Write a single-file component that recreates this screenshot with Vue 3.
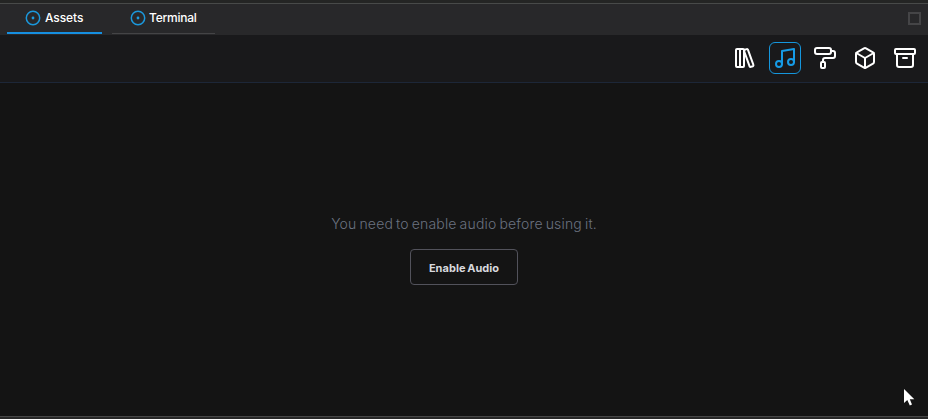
<script setup>
const tabs = [
  { name: 'Assets', active: true },
  { name: 'Terminal', active: false },
]
const tools = [
  {
    name: 'library',
    paths: [
      'M4 3h6a1 1 0 0 1 1 1v16a1 1 0 0 1-1 1H4a1 1 0 0 1-1-1V4a1 1 0 0 1 1-1z',
      'M7 3v18',
      'M20.4 18.9c.2.5-.1 1.1-.6 1.3l-1.9.7c-.5.2-1.1-.1-1.3-.6L11.1 5.1c-.2-.5.1-1.1.6-1.3l1.9-.7c.5-.2 1.1.1 1.3.6Z',
    ],
  },
  {
    name: 'music',
    active: true,
    paths: ['M9 18V5l12-2v13', 'M9 18a3 3 0 1 1-6 0a3 3 0 0 1 6 0', 'M21 16a3 3 0 1 1-6 0a3 3 0 0 1 6 0'],
  },
  {
    name: 'paint',
    paths: [
      'M4 2h12a2 2 0 0 1 2 2v2a2 2 0 0 1-2 2H4a2 2 0 0 1-2-2V4a2 2 0 0 1 2-2z',
      'M10 16v-2a2 2 0 0 1 2-2h8a2 2 0 0 0 2-2V7a2 2 0 0 0-2-2h-2',
      'M9 16h2a1 1 0 0 1 1 1v4a1 1 0 0 1-1 1H9a1 1 0 0 1-1-1v-4a1 1 0 0 1 1-1z',
    ],
  },
  {
    name: 'box',
    paths: [
      'M21 8a2 2 0 0 0-1-1.73l-7-4a2 2 0 0 0-2 0l-7 4A2 2 0 0 0 3 8v8a2 2 0 0 0 1 1.73l7 4a2 2 0 0 0 2 0l7-4A2 2 0 0 0 21 16Z',
      'm3.3 7 8.7 5 8.7-5',
      'M12 22V12',
    ],
  },
  {
    name: 'archive',
    paths: [
      'M3 3h18a1 1 0 0 1 1 1v3a1 1 0 0 1-1 1H3a1 1 0 0 1-1-1V4a1 1 0 0 1 1-1z',
      'M4 8v11a2 2 0 0 0 2 2h12a2 2 0 0 0 2-2V8',
      'M10 12h4',
    ],
  },
]
</script>

<template>
  <div class="panel">
    <header class="tabbar">
      <nav class="tabs">
        <div v-for="t in tabs" :key="t.name" class="tab" :class="[t.name.toLowerCase(), { active: t.active }]">
          <svg class="dot" width="16" height="16" viewBox="0 0 16 16">
            <circle cx="8" cy="8" r="6.7" fill="none" stroke="#1b98dc" stroke-width="1.5" />
            <circle cx="8" cy="8" r="1.4" fill="#1b9be0" />
          </svg>
          <span class="label">{{ t.name }}</span>
        </div>
      </nav>
      <div class="maximize"></div>
    </header>
    <div class="toolbar">
      <button v-for="t in tools" :key="t.name" class="tool" :class="{ active: t.active }" :aria-label="t.name">
        <svg width="24" height="24" viewBox="0 0 24 24">
          <path v-for="p in t.paths" :key="p" :d="p" />
        </svg>
      </button>
    </div>
    <main class="content">
      <p class="message">You need to enable audio before using it.</p>
      <button class="enable"><span>Enable Audio</span></button>
    </main>
    <footer class="bottom"></footer>
    <svg class="cursor" width="12" height="18" viewBox="0 0 12 18">
      <path d="M0 0V14L3.3 11L5.8 16.4L8 15.5L5.8 10.2H10.3Z" fill="#fff" />
    </svg>
  </div>
</template>

<style>
body {
  background: #141414;
}
</style>

<style scoped>
.panel {
  position: relative;
  box-sizing: border-box;
  height: 419px;
  display: flex;
  flex-direction: column;
  background: #141414;
  border-top: 3px solid #242524;
  font-family: Inter, sans-serif;
  overflow: hidden;
}
.tabbar {
  box-sizing: border-box;
  height: 32px;
  flex: none;
  display: flex;
  justify-content: space-between;
  background: #28282a;
  border-top: 1px solid #484a49;
  padding: 0 7px;
}
.tabs {
  display: flex;
  gap: 10px;
  height: 30px;
}
.tab {
  box-sizing: border-box;
  height: 30px;
  display: flex;
  gap: 4px;
  padding: 6px 0 0 18px;
  border-bottom: 1px solid #444446;
}
.tab.active {
  border-bottom: 2px solid #168fe0;
}
.assets {
  width: 95px;
}
.terminal {
  width: 103px;
  gap: 3px;
}
.label {
  font: 500 12px/16px Inter, sans-serif;
  letter-spacing: -0.1px;
  color: #fff;
  white-space: nowrap;
}
.terminal .label {
  letter-spacing: -0.25px;
}
.maximize {
  box-sizing: border-box;
  width: 13px;
  height: 13px;
  margin-top: 8px;
  border: 2px solid #454547;
}
.toolbar {
  box-sizing: border-box;
  height: 48px;
  flex: none;
  display: flex;
  justify-content: flex-end;
  gap: 8px;
  padding: 7px 7px 0;
  background: #19191b;
  border-bottom: 1px solid #1d2738;
}
.tool {
  box-sizing: border-box;
  width: 32px;
  height: 32px;
  padding: 0;
  display: flex;
  align-items: center;
  justify-content: center;
  background: transparent;
  border: 1px solid transparent;
  border-radius: 6px;
  color: #fff;
}
.tool.active {
  color: #169be6;
  border-color: #1596dd;
}
.tool svg {
  fill: none;
  stroke: currentColor;
  stroke-width: 2;
  stroke-linecap: round;
  stroke-linejoin: round;
}
.content {
  flex: 1;
  display: flex;
  flex-direction: column;
  align-items: center;
  padding-top: 131px;
}
.message {
  margin: 0;
  font: 300 14px/20px Inter, sans-serif;
  letter-spacing: 0.17px;
  word-spacing: -1.1px;
  color: #6b7280;
  white-space: nowrap;
}
.enable {
  box-sizing: border-box;
  width: 108px;
  height: 36px;
  margin-top: 15px;
  padding: 2px 0 0;
  border: 1px solid #52525b;
  border-radius: 4px;
  background: transparent;
  color: #d8d9de;
  font: 700 11px/16px Inter, sans-serif;
  letter-spacing: 0.03px;
  word-spacing: -0.9px;
  white-space: nowrap;
}
.bottom {
  box-sizing: border-box;
  height: 3px;
  flex: none;
  background: #282828;
  border-top: 1px solid #484848;
}
.cursor {
  position: absolute;
  left: 904px;
  top: 386px;
}
</style>
